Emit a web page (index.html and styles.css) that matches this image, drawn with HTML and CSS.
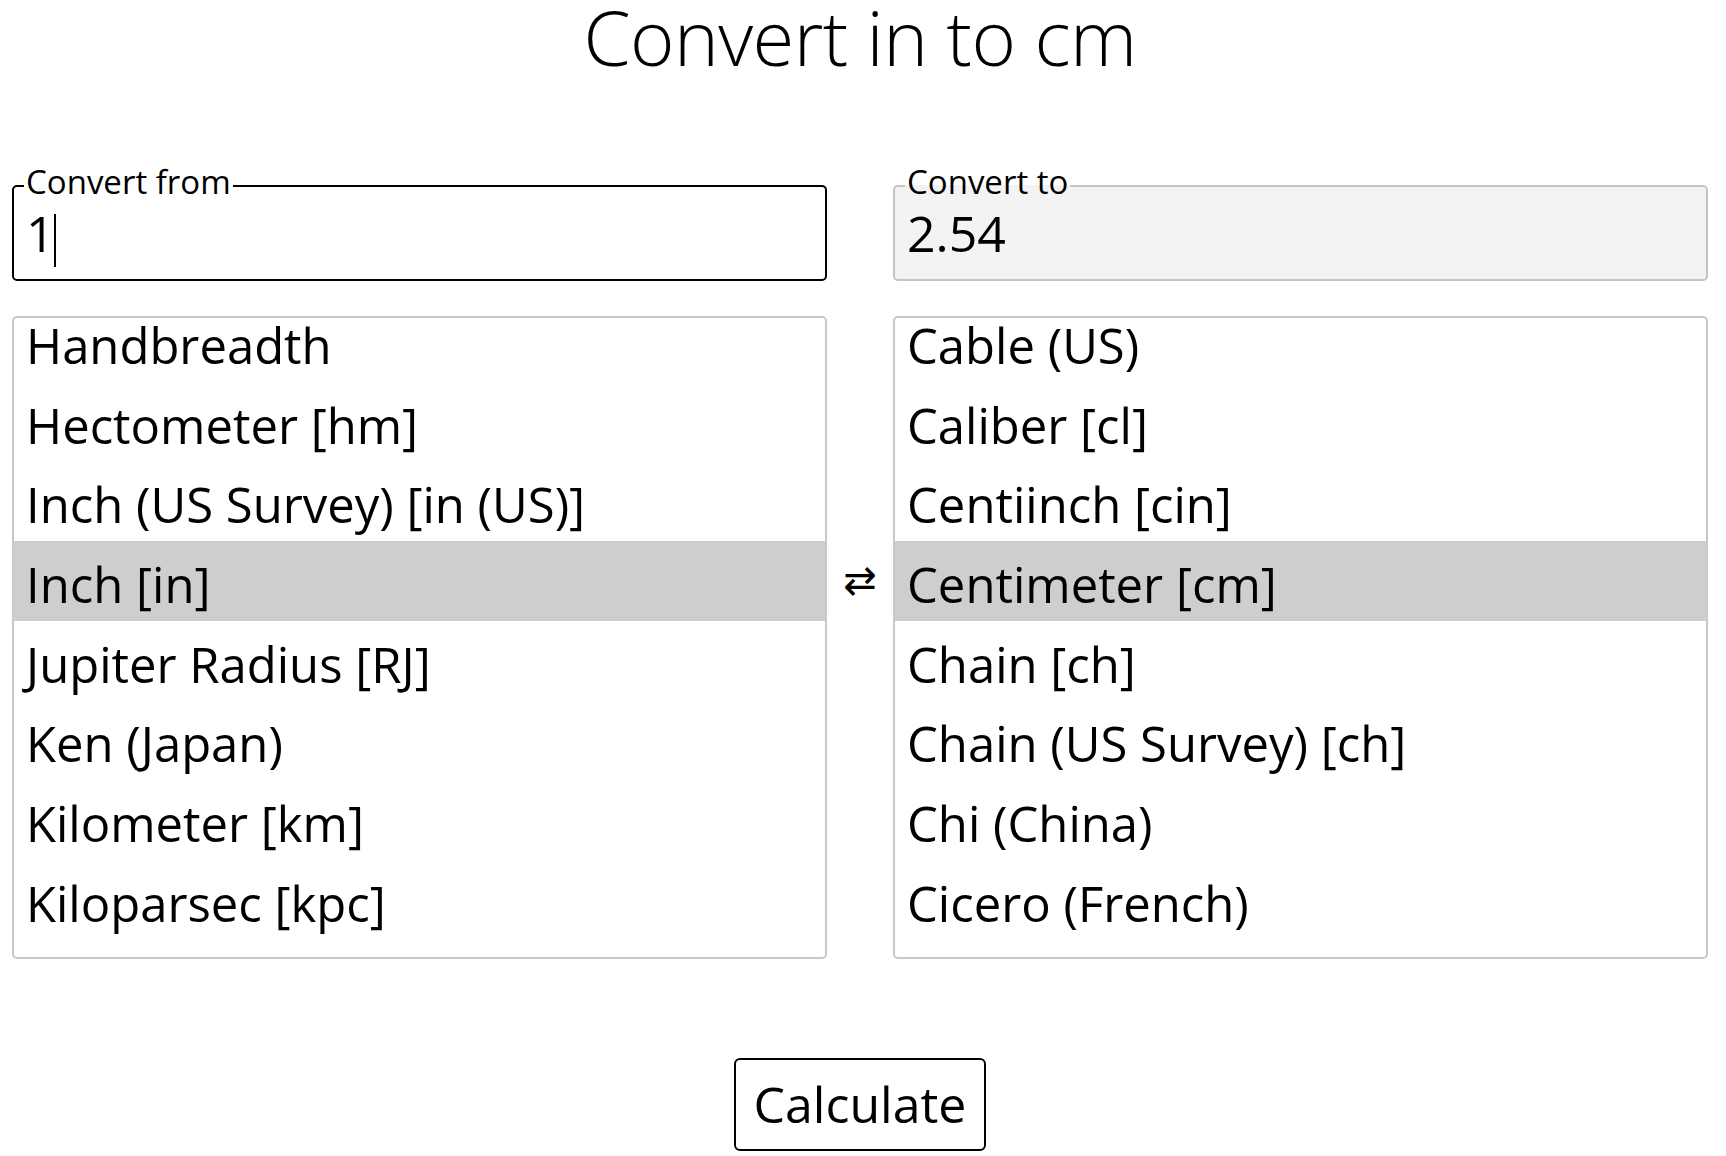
FILE: index.html
```html
<!DOCTYPE html>
<html lang="en">
  <head>
    <meta charset="utf-8" />
    <meta name="viewport" content="width=device-width, initial-scale=1" />
    <title>Convert in to cm</title>
    <link rel="stylesheet" href="styles.css">
  </head>
  <body>
    <div class="page">
      <h1 class="title">Convert in to cm</h1>
      <div class="converter">
        <fieldset class="field field-from">
          <legend>Convert from</legend>
          <input value="1" autofocus />
          <span class="caret"></span>
        </fieldset>
        <div></div>
        <fieldset class="field field-to">
          <legend>Convert to</legend>
          <input value="2.54" readonly tabindex="-1" />
        </fieldset>

        <div class="units">
          <ul>
            <li>Handbreadth</li>
            <li>Hectometer [hm]</li>
            <li>Inch (US Survey) [in (US)]</li>
            <li class="selected">Inch [in]</li>
            <li>Jupiter Radius [RJ]</li>
            <li>Ken (Japan)</li>
            <li>Kilometer [km]</li>
            <li>Kiloparsec [kpc]</li>
            <li>Kiloyard [kyd]</li>
          </ul>
        </div>
        <div class="swap">&#8644;</div>
        <div class="units">
          <ul>
            <li>Cable (US)</li>
            <li>Caliber [cl]</li>
            <li>Centiinch [cin]</li>
            <li class="selected">Centimeter [cm]</li>
            <li>Chain [ch]</li>
            <li>Chain (US Survey) [ch]</li>
            <li>Chi (China)</li>
            <li>Cicero (French)</li>
            <li>Cubit (UK)</li>
          </ul>
        </div>
      </div>
      <div class="actions">
        <button type="button">Calculate</button>
      </div>
    </div>
  </body>
</html>
```

FILE: styles.css
```css
body {
  margin: 0;
  background-color: white;
  color: #000;
  font-family: "Open Sans", "Noto Sans", sans-serif;
}
.page {
  width: 1696px;
  padding-left: 12px;
}
.title {
  margin: 0;
  text-align: center;
  font-size: 76px;
  font-weight: 300;
  letter-spacing: -0.6px;
  line-height: 74px;
}
.converter {
  margin-top: 91px;
  display: grid;
  grid-template-columns: 815px 66px 815px;
  row-gap: 35px;
}
.field {
  position: relative;
  margin: 0;
  padding: 0 10px 19px;
  border: 2px solid #c4c4c4;
  border-radius: 5px;
  min-width: 0;
}
.field legend {
  padding: 0 2px 8px;
  font-size: 33px;
  line-height: 34px;
}
.field input {
  display: block;
  width: 100%;
  box-sizing: border-box;
  height: 53px;
  margin: 0;
  padding: 0 2px;
  border: none;
  outline: none;
  background: transparent;
  font-family: inherit;
  font-size: 50px;
  line-height: 53px;
  color: #000;
  caret-color: transparent;
}
.field-from {
  border-color: #000;
}
.field-to {
  background-color: #f3f3f3;
}
.caret {
  position: absolute;
  left: 40px;
  top: 7px;
  width: 2px;
  height: 53px;
  background-color: #000;
}
.units {
  height: 643px;
  box-sizing: border-box;
  border: 2px solid #c8c8c8;
  border-radius: 5px;
  overflow: hidden;
}
.units ul {
  list-style: none;
  margin: -16px 0 0;
  padding: 0;
}
.units li {
  box-sizing: border-box;
  height: 79.7px;
  padding: 8px 0 0 12px;
  font-size: 49px;
  line-height: 71.7px;
  white-space: nowrap;
}
.units li.selected {
  background-color: #cecece;
}
.swap {
  padding-top: 244px;
  text-align: center;
  font-family: "DejaVu Sans", sans-serif;
  font-size: 40px;
  line-height: 40px;
}
.actions {
  margin-top: 99px;
  text-align: center;
}
.actions button {
  height: 93px;
  padding: 0 18px;
  border: 2px solid #000;
  border-radius: 6px;
  background: white;
  color: #000;
  font-family: inherit;
  font-size: 50px;
  line-height: 89px;
}
```
